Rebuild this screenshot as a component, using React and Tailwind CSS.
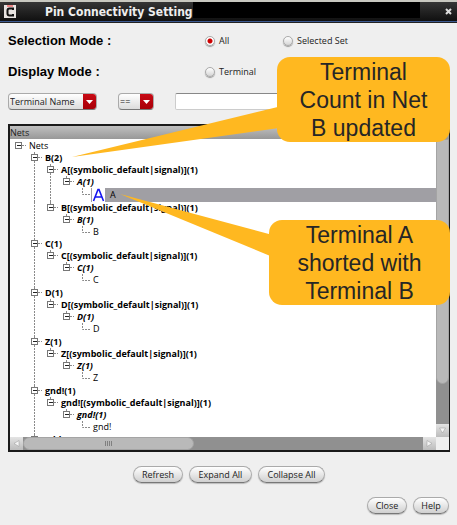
import React from "react";

const nets = ["C", "D", "Z", "gnd!"];

const rows = [
  { level: 0, text: "Nets" },
  { level: 1, text: "B(2)" },
  { level: 2, text: "A[(symbolic_default|signal)](1)", more: true },
  { level: 3, text: "A(1)", through: true },
  { level: 4, text: "A", through: true, selected: true },
  { level: 2, text: "B[(symbolic_default|signal)](1)" },
  { level: 3, text: "B(1)" },
  { level: 4, text: "B" },
  ...nets.flatMap((name) => [
    { level: 1, text: `${name}(1)` },
    { level: 2, text: `${name}[(symbolic_default|signal)](1)` },
    { level: 3, text: `${name}(1)` },
    { level: 4, text: name, tall: true },
  ]),
  { level: 1, text: "vdd!(1)" },
];

const line = { stroke: "#8a8a8a", strokeWidth: 1, strokeDasharray: "2 1" };

function Guide({ show }) {
  return (
    <svg className="h-full w-4 shrink-0" aria-hidden="true">
      {show && <line x1="8.5" y1="0" x2="8.5" y2="100%" {...line} />}
    </svg>
  );
}

function Toggle({ level, more, label }) {
  return (
    <button type="button" aria-label={`Collapse ${label}`} className="h-full w-4 shrink-0">
      <svg className="block h-full w-4" aria-hidden="true">
        {level > 0 && <line x1="8.5" y1="0" x2="8.5" y2="3" {...line} />}
        {(level === 1 || more) && <line x1="8.5" y1="9" x2="8.5" y2="100%" {...line} />}
        <line x1="12" y1="5.5" x2="16" y2="5.5" {...line} />
        <rect x="5.5" y="2.5" width="6" height="6" fill="#fff" stroke="#777" />
        <line x1="7" y1="5.5" x2="11" y2="5.5" stroke="#222" />
      </svg>
    </button>
  );
}

function LeafLine() {
  return (
    <svg className="h-full w-4 shrink-0" aria-hidden="true">
      <path d="M8.5 0V6.5H16" fill="none" {...line} />
    </svg>
  );
}

const textStyle = ["", "font-bold", "font-bold", "font-bold italic", ""];

function Row({ row }) {
  const { level, text, selected, through, tall, more } = row;
  const height = selected ? "h-[14px]" : tall ? "h-[13px]" : "h-3";
  return (
    <li className={`flex ${height}`}>
      {Array.from({ length: level }, (_, i) => (
        <Guide key={i} show={i === 1 || (i === 2 && through)} />
      ))}
      {level === 4 ? <LeafLine /> : <Toggle level={level} more={more} label={text} />}
      {selected ? (
        <div className="ml-px flex flex-1 items-center gap-[5px] bg-[#a09fa4]">
          <svg width="14" height="14" aria-hidden="true">
            <rect x="1" width="13" height="14" fill="#fff" />
            <path d="M2.500 13L7 1.500H8L12.500 13M4 9H11" fill="none" stroke="#1414f0" strokeWidth="1.600" />
          </svg>
          <span>{text}</span>
        </div>
      ) : (
        <span className={`whitespace-nowrap pl-[3px] leading-3 ${textStyle[level]}`}>{text}</span>
      )}
    </li>
  );
}

function Radio({ name, label, defaultChecked }) {
  return (
    <label className="flex items-center gap-1">
      <input
        type="radio"
        name={name}
        defaultChecked={defaultChecked}
        className="size-[10px] appearance-none rounded-full border border-[#aaa] bg-linear-to-b from-white to-[#d5d5d5] shadow-[0_1px_1px_#999] checked:bg-[radial-gradient(circle,#cc0000_0_2px,#fff_3px)]"
      />
      {label}
    </label>
  );
}

function Select({ label, value, className }) {
  return (
    <div className={`flex h-[17px] overflow-hidden rounded border border-[#aaa] border-b-[#777] bg-linear-to-b from-white to-[#dcdcdc] ${className}`}>
      <div className="grid w-full">
        <select aria-label={label} className="col-start-1 row-start-1 w-full appearance-none pl-px outline-none">
          <option>{value}</option>
        </select>
        <span className="pointer-events-none col-start-1 row-start-1 flex w-[13px] items-center justify-center justify-self-end bg-linear-to-b from-[#c80a14] to-[#a80008]">
          <svg width="7" height="4" aria-hidden="true">
            <path d="M0 0H7L3.5 4Z" fill="#fff" />
          </svg>
        </span>
      </div>
    </div>
  );
}

function PushButton({ children, className }) {
  return (
    <button
      type="button"
      className={`h-[17px] whitespace-nowrap rounded-full border border-[#aaa] border-b-[#777] bg-linear-to-b from-white to-[#d0d0d0] leading-none shadow-[0_1px_1px_#bbb] ${className}`}
    >
      {children}
    </button>
  );
}

function Arrow({ d, className }) {
  return (
    <span className={`flex items-center justify-center bg-linear-to-b from-[#e4e4e4] to-[#bcbcbc] ${className}`}>
      <svg width="7" height="7" aria-hidden="true">
        <path d={d} fill="#f4f4f4" stroke="#999" strokeWidth="0.5" />
      </svg>
    </span>
  );
}

function Callout({ lines, className }) {
  return (
    <div className={`absolute h-[85px] rounded-[13px] bg-[#ffb820] pt-px text-center font-['Liberation_Sans',sans-serif] text-[23px] leading-7 text-[#262626] ${className}`}>
      {lines.map((text) => (
        <div key={text}>{text}</div>
      ))}
    </div>
  );
}

export default function App() {
  return (
    <div className="relative flex h-screen flex-col bg-[#efefef] font-['Open_Sans','Noto_Sans',sans-serif] text-[9px] text-[#222]">
      <header className="flex h-[22px] shrink-0 items-center border-t-2 border-b border-t-[#c8c8c0] border-b-[#3c5a92] bg-linear-to-b from-[#363636] to-[#101010] px-1">
        <svg width="12" height="13" aria-hidden="true">
          <rect width="12" height="13" fill="#e8e4e2" />
          <rect x="3" y="0" width="6" height="2" fill="#ee8888" />
          <path d="M9 5V3.5H5.5Q3.5 3.5 3.5 5.5V8.5Q3.5 10.5 5.5 10.5H9V9" fill="none" stroke="#111" strokeWidth="2" />
        </svg>
        <h1 className="ml-[29px] w-[148px] whitespace-nowrap pt-px font-['DejaVu_Sans_Condensed','DejaVu_Sans',sans-serif] text-[12px] font-bold text-[#eee]">
          Pin Connectivity Setting
        </h1>
        <div className="mb-[3px] h-4 flex-1 bg-black" />
        <button type="button" aria-label="Close window" className="ml-6 p-px">
          <svg width="7" height="7" aria-hidden="true">
            <path d="M1 1L6 6M6 1L1 6" stroke="#ddd" strokeWidth="2" />
          </svg>
        </button>
      </header>

      <main className="flex min-h-0 flex-1 flex-col border-t border-t-[#222] pr-[7px] pb-[11px] pl-2">
        <fieldset className="mt-2 flex h-[18px] items-center">
          <span className="w-[197px] font-['Liberation_Sans',sans-serif] text-[13px] font-bold text-black">Selection Mode :</span>
          <div className="w-[78px]">
            <Radio name="selection" label="All" defaultChecked />
          </div>
          <Radio name="selection" label="Selected Set" />
        </fieldset>
        <fieldset className="mt-[13px] flex h-[18px] items-center">
          <span className="w-[197px] font-['Liberation_Sans',sans-serif] text-[13px] font-bold text-black">Display Mode :</span>
          <Radio name="display" label="Terminal" />
        </fieldset>
        <div className="mt-[13px] flex gap-[21px]">
          <Select label="Filter field" value="Terminal Name" className="w-[89px]" />
          <Select label="Operator" value="==" className="w-9" />
          <input type="text" aria-label="Filter value" className="h-[17px] min-w-0 flex-1 rounded-xs border border-[#ccc] border-t-[#888] bg-white outline-none" />
        </div>

        <section className="mt-[14px] flex min-h-0 flex-1 flex-col border-2 border-r border-[#1a1a1a] bg-white">
          <h2 className="h-[13px] shrink-0 bg-linear-to-b from-[#c0c0c0] to-[#989898] leading-[13px]">Nets</h2>
          <div className="flex min-h-0 flex-1">
            <ul className="min-w-0 flex-1 overflow-hidden pt-px text-black">
              {rows.map((row, i) => (
                <Row key={i} row={row} />
              ))}
            </ul>
            <div className="flex w-[13px] flex-col bg-[#909090]">
              <div className="h-[245px] rounded-b-full border border-[#a4a4a4] bg-[#b9b9b9]" />
              <Arrow d="M0.5 1H6.5L3.5 6Z" className="mt-auto h-[13px]" />
            </div>
          </div>
          <div className="flex h-[13px] shrink-0 bg-[#909090]">
            <Arrow d="M6 0.5V6.5L1 3.5Z" className="w-[13px]" />
            <div className="flex w-[171px] items-center justify-center gap-px rounded-full border border-[#a4a4a4] bg-[#b9b9b9]">
              {[0, 1, 2, 3].map((i) => (
                <span key={i} className="h-[5px] w-px bg-[#808080]" />
              ))}
            </div>
            <Arrow d="M1 0.5V6.5L6 3.5Z" className="ml-auto w-[13px]" />
            <span className="w-[13px] bg-[#efefef]" />
          </div>
        </section>

        <div className="mt-[14px] flex justify-center gap-[6px]">
          <PushButton className="w-[50px]">Refresh</PushButton>
          <PushButton className="w-[63px]">Expand All</PushButton>
          <PushButton className="w-[67px]">Collapse All</PushButton>
        </div>
        <div className="mt-[14px] flex justify-end gap-[6px] pr-px">
          <PushButton className="w-10">Close</PushButton>
          <PushButton className="w-9">Help</PushButton>
        </div>
      </main>

      <svg width="457" height="320" className="pointer-events-none absolute top-0 left-0" aria-hidden="true">
        <path d="M72 157L290 104V126.500Z" fill="#ffb820" />
        <path d="M120 194L280 237V260Z" fill="#ffb820" />
      </svg>
      <Callout lines={["Terminal", "Count in Net", "B updated"]} className="top-[57px] left-[277px] w-[173px]" />
      <Callout lines={["Terminal A", "shorted with", "Terminal B"]} className="top-[220px] left-[269px] w-[181px]" />
    </div>
  );
}
